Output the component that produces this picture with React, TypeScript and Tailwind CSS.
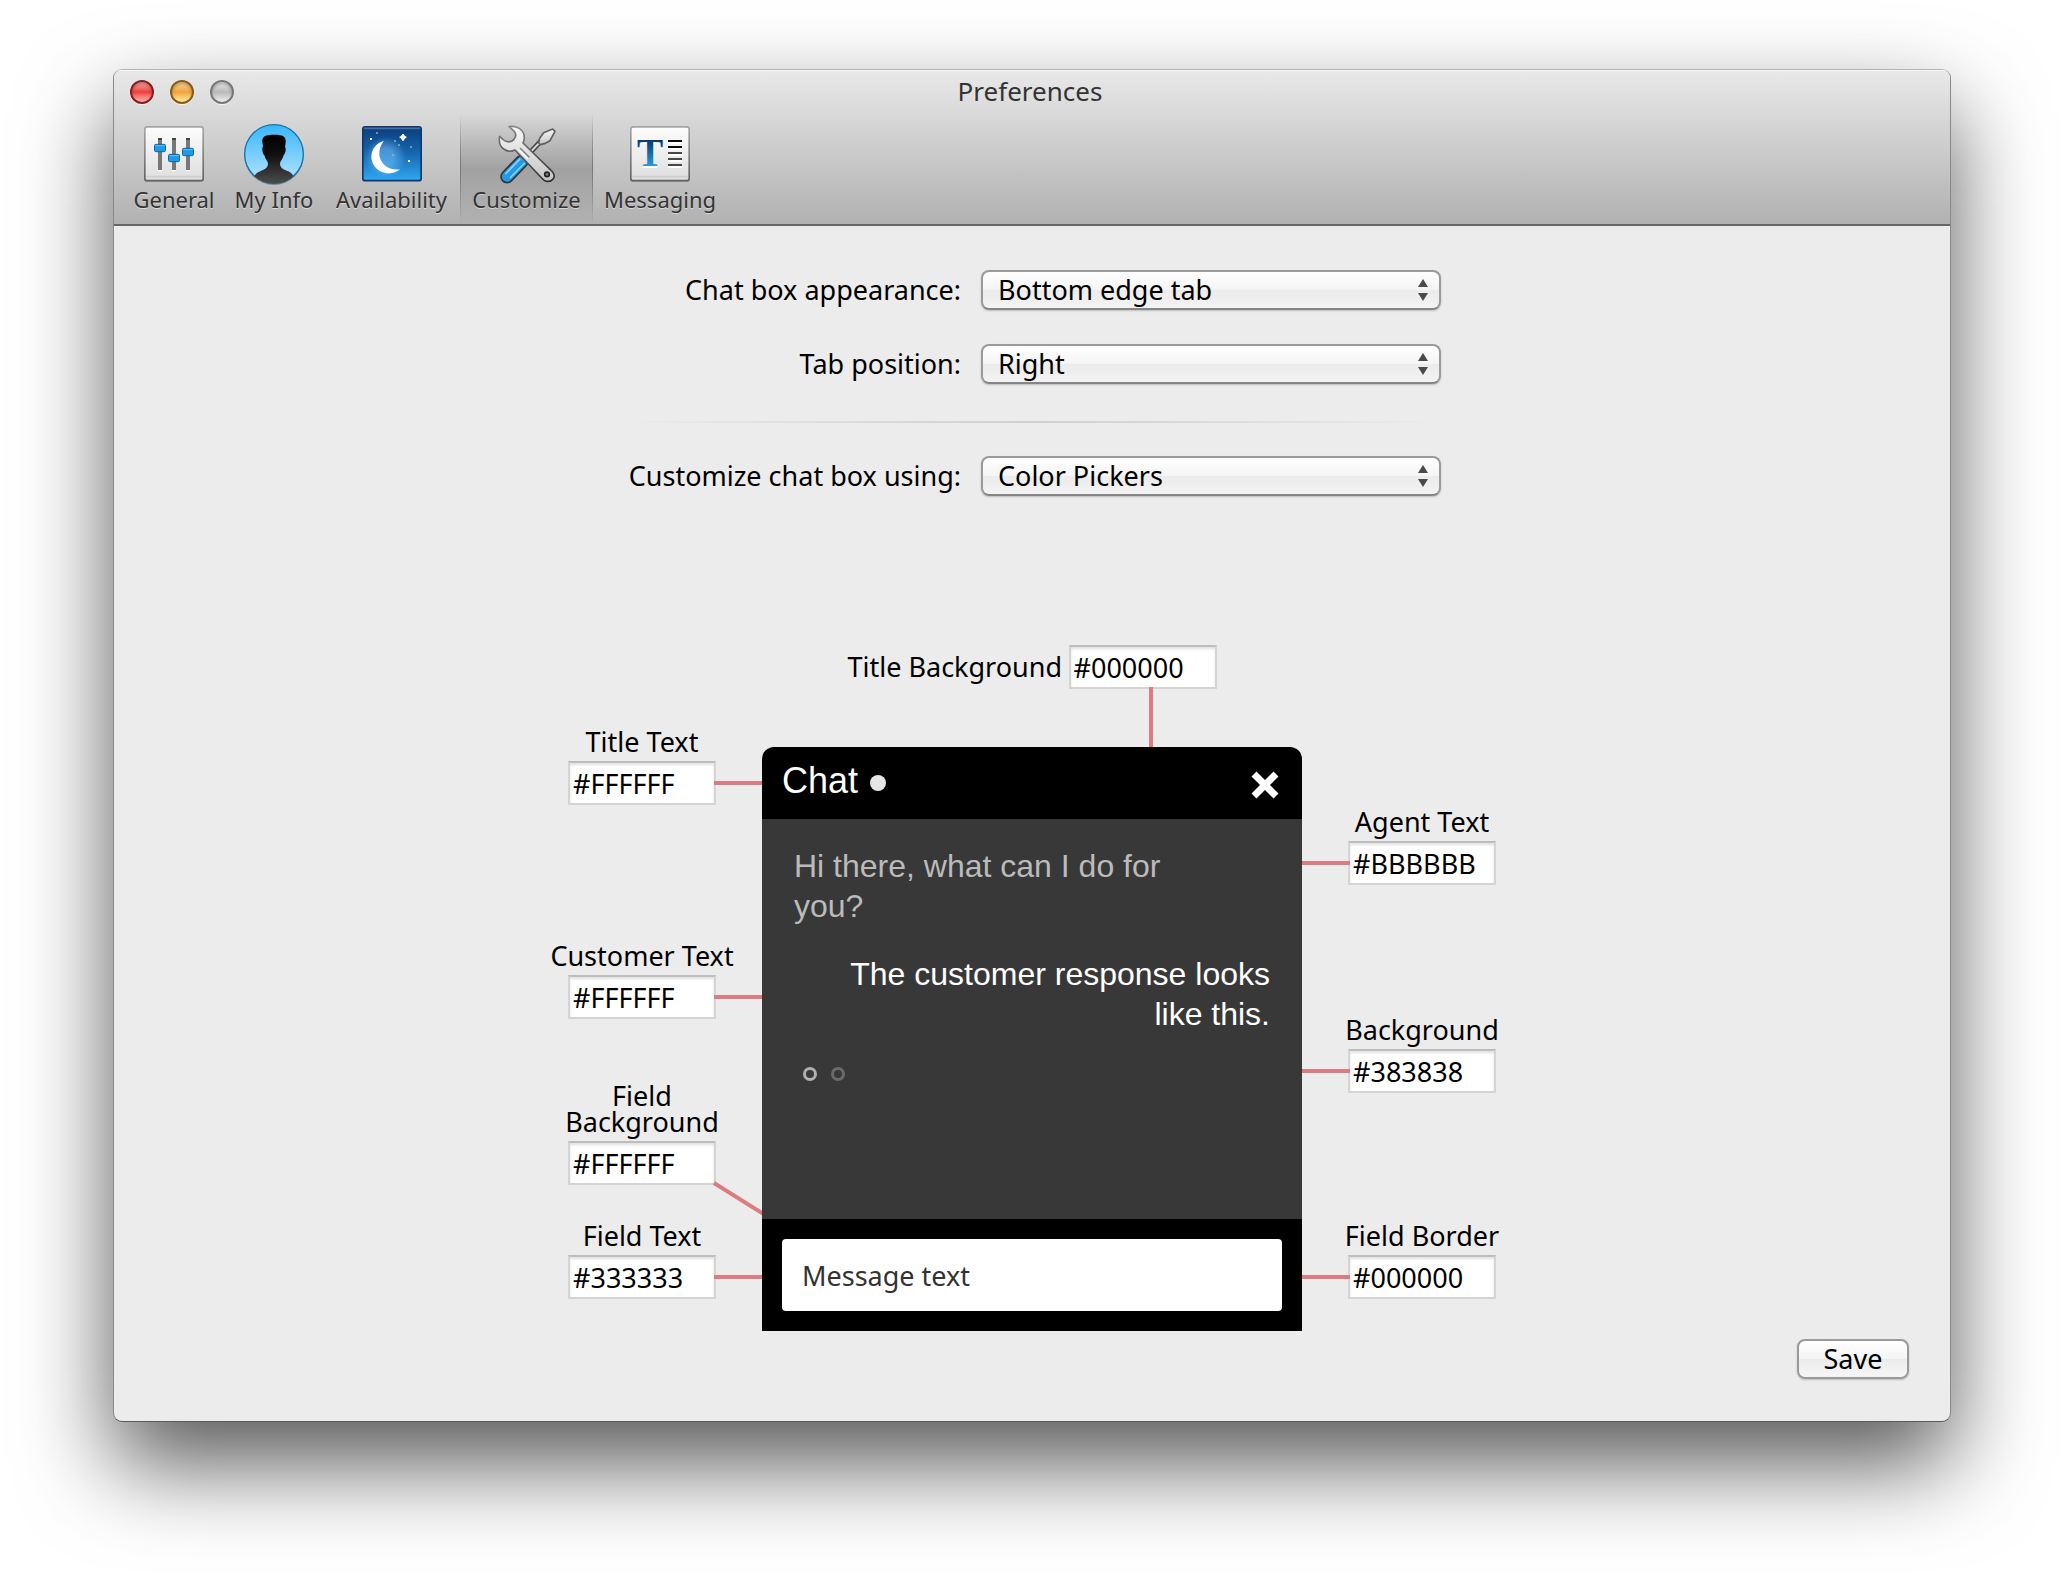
import React from "react";

type ToolbarItem = {
  label: string;
  width: string;
  icon: React.ReactNode;
  selected?: boolean;
};

function PlateDefs({ id }: { id: string }) {
  return (
    <defs>
      <linearGradient id={`${id}-fill`} x1="0" y1="0" x2="0" y2="1">
        <stop offset="0" stopColor="#fdfdfd" />
        <stop offset="1" stopColor="#dedede" />
      </linearGradient>
      <linearGradient id={`${id}-edge`} x1="0" y1="0" x2="0" y2="1">
        <stop offset="0" stopColor="#a6a6a6" />
        <stop offset="1" stopColor="#636363" />
      </linearGradient>
    </defs>
  );
}

function GeneralIcon() {
  const sliders = [
    { x: 48, y: 56 },
    { x: 90, y: 86 },
    { x: 132, y: 68 },
  ];
  return (
    <svg viewBox="0 0 180 186" className="h-[62px] w-[60px]" aria-hidden="true">
      <PlateDefs id="general" />
      <rect x="1" y="12" width="178" height="162" rx="8" fill="#000" opacity="0.25" />
      <rect x="2.5" y="8.5" width="175" height="161" rx="7" fill="url(#general-fill)" stroke="url(#general-edge)" strokeWidth="5" />
      <path d="M6 158h168" stroke="#cfcfcf" strokeWidth="5" />
      {sliders.map((s) => (
        <g key={s.x}>
          <rect x={s.x - 6} y="42" width="12" height="96" fill="#777" />
          <rect x={s.x - 6} y="42" width="12" height="6" fill="#444" />
          <rect x={s.x - 6} y="138" width="12" height="4" fill="#fff" />
          <rect x={s.x - 16.5} y={s.y + 5} width="33" height="22" rx="4" fill="#1e9ae6" stroke="#0a6aa8" strokeWidth="3" />
          <path d={`M${s.x - 14} ${s.y + 9}h28`} stroke="#4dbdf7" strokeWidth="4" />
        </g>
      ))}
    </svg>
  );
}

function MyInfoIcon() {
  return (
    <svg viewBox="0 0 180 186" className="h-[62px] w-[60px]" aria-hidden="true">
      <defs>
        <linearGradient id="info-sky" x1="0" y1="0" x2="0" y2="1">
          <stop offset="0" stopColor="#38b6fb" />
          <stop offset="1" stopColor="#b9e5ff" />
        </linearGradient>
        <linearGradient id="info-man" x1="0" y1="0" x2="0" y2="1">
          <stop offset="0" stopColor="#000" />
          <stop offset="0.4" stopColor="#111" />
          <stop offset="1" stopColor="#505050" />
        </linearGradient>
        <clipPath id="info-clip">
          <circle cx="90" cy="90" r="89" />
        </clipPath>
      </defs>
      <circle cx="90" cy="94" r="89" fill="#000" opacity="0.3" />
      <circle cx="90" cy="90" r="88" fill="url(#info-sky)" stroke="#0f76b0" strokeWidth="4" />
      <path
        clipPath="url(#info-clip)"
        fill="url(#info-man)"
        d="M57 66C54 52 53 43 62 37C74 31 108 31 118 37C127 43 126 54 123 68C127 74 125 88 119 94C117 104 110 110 108 118C108 130 116 136 128 140C142 145 150 150 158 184H22C30 150 38 145 52 140C64 136 72 130 72 118C70 110 63 104 61 94C55 88 53 74 57 66Z"
      />
    </svg>
  );
}

function AvailabilityIcon() {
  return (
    <svg viewBox="0 0 180 186" className="h-[62px] w-[60px]" aria-hidden="true">
      <defs>
        <linearGradient id="night" x1="0" y1="0" x2="0" y2="1">
          <stop offset="0" stopColor="#0b3d7a" />
          <stop offset="0.5" stopColor="#1668b0" />
          <stop offset="1" stopColor="#2fa8f2" />
        </linearGradient>
        <radialGradient id="night-glow">
          <stop offset="0.4" stopColor="#7cc8ff" stopOpacity="0.5" />
          <stop offset="1" stopColor="#7cc8ff" stopOpacity="0" />
        </radialGradient>
      </defs>
      <rect x="1" y="12" width="178" height="162" rx="8" fill="#000" opacity="0.25" />
      <rect x="2.5" y="8.5" width="175" height="161" rx="7" fill="url(#night)" stroke="#12376a" strokeWidth="5" />
      <path d="M6 13h168" stroke="#466fa3" strokeWidth="5" />
      <circle cx="70" cy="100" r="62" fill="url(#night-glow)" />
      <path fill="#fff" d="M66 51C26 62 18 106 42 132C62 154 96 152 114 136C86 140 62 126 54 102C49 84 54 64 66 51Z" />
      <path d="M123 30v20M113 40h20" stroke="#fff" strokeWidth="6" />
      <rect x="117" y="34" width="12" height="12" fill="#fff" />
      <path d="M24 42h6v6h-6zM138 108h6v6h-6z" fill="#fff" />
      <path d="M42 24h6v6h-6zM96 48h6v6h-6zM108 60h6v6h-6zM144 66h6v6h-6zM90 90h6v6h-6z" fill="#8fb4dd" opacity="0.7" />
    </svg>
  );
}

function CustomizeIcon() {
  return (
    <svg viewBox="231 190 180 186" className="h-[62px] w-[60px]" aria-hidden="true">
      <defs>
        <linearGradient id="steel" x1="0" y1="0" x2="0" y2="1">
          <stop offset="0" stopColor="#f8f8f8" />
          <stop offset="1" stopColor="#c4c4c4" />
        </linearGradient>
        <linearGradient id="steel-edge" x1="0" y1="0" x2="0" y2="1">
          <stop offset="0" stopColor="#868686" />
          <stop offset="1" stopColor="#303030" />
        </linearGradient>
      </defs>
      <path d="M362 242L330 276" stroke="#444" strokeWidth="15" />
      <path d="M362 242L330 276" stroke="#d8d8d8" strokeWidth="6" />
      <path d="M398 205L405 212L390 240L373 249L361 252L356 246L359 233L371 216Z" fill="url(#steel)" stroke="#606060" strokeWidth="5" strokeLinejoin="round" />
      <path d="M306 302L261 348" stroke="#333" strokeWidth="41" strokeLinecap="round" />
      <path d="M306 302L261 348" stroke="#219be8" strokeWidth="31" strokeLinecap="round" />
      <path d="M301 294L256 340M314 307L270 352" stroke="#8bd2fb" strokeWidth="5" />
      <path
        d="M267 198C291 193 313 208 313 231C313 238 311 242 309 247L397 333C406 344 403 353 396 358C388 365 374 363 368 355L285 268C262 279 232 262 239 227L251 238C260 246 273 246 282 236C290 226 289 217 280 209Z"
        fill="url(#steel)"
        stroke="url(#steel-edge)"
        strokeWidth="5"
        strokeLinejoin="round"
      />
      <path d="M300 262L328 290" stroke="#8a8a8a" strokeWidth="5" />
      <path d="M297 267L324 294" stroke="#fff" strokeWidth="4" />
      <circle cx="381" cy="341" r="7" fill="#777" stroke="#222" strokeWidth="5" />
    </svg>
  );
}

function MessagingIcon() {
  return (
    <svg viewBox="0 0 180 186" className="h-[62px] w-[60px]" aria-hidden="true">
      <PlateDefs id="messaging" />
      <defs>
        <linearGradient id="letter" x1="0" y1="0" x2="0" y2="1">
          <stop offset="0.2" stopColor="#073a70" />
          <stop offset="0.8" stopColor="#2b9ce0" />
        </linearGradient>
      </defs>
      <rect x="1" y="12" width="178" height="162" rx="8" fill="#000" opacity="0.25" />
      <rect x="2.5" y="8.5" width="175" height="161" rx="7" fill="url(#messaging-fill)" stroke="url(#messaging-edge)" strokeWidth="5" />
      <path d="M6 158h168" stroke="#cfcfcf" strokeWidth="5" />
      <text x="60" y="132" textAnchor="middle" fontFamily="Liberation Serif, serif" fontWeight="700" fontSize="118" fill="#fff">T</text>
      <text x="60" y="127" textAnchor="middle" fontFamily="Liberation Serif, serif" fontWeight="700" fontSize="118" fill="url(#letter)">T</text>
      <path d="M114 57h42M114 75h42M114 93h42M114 111h42M114 129h42" stroke="#fff" strokeWidth="6" />
      <path d="M114 51h42M114 69h42" stroke="#0a0a0a" strokeWidth="6" />
      <path d="M114 87h42M114 105h42M114 123h42" stroke="#484848" strokeWidth="6" />
    </svg>
  );
}

const toolbar: ToolbarItem[] = [
  { label: "General", width: "w-[102px]", icon: <GeneralIcon /> },
  { label: "My Info", width: "w-[98px]", icon: <MyInfoIcon /> },
  { label: "Availability", width: "w-[137px]", icon: <AvailabilityIcon /> },
  { label: "Customize", width: "w-[133px]", icon: <CustomizeIcon />, selected: true },
  { label: "Messaging", width: "w-[134px]", icon: <MessagingIcon /> },
];

const lights = [
  { name: "Close", className: "border-[#8c1d1d] bg-linear-to-b from-[#f6a9a4] via-[#ee3b3b] to-[#ffb3b3]" },
  { name: "Minimize", className: "border-[#8a5a17] bg-linear-to-b from-[#fbd9a0] via-[#f0a335] to-[#fff0a0]" },
  { name: "Zoom", className: "border-[#777777] bg-linear-to-b from-[#ededed] via-[#b9b9b9] to-[#f0f0f0]" },
];

function TitleBar() {
  return (
    <header className="border-b-2 border-[#666666] bg-linear-to-b from-[#e9e9e9] to-[#b1b1b1] shadow-[inset_0_1px_0_#f6f6f6]">
      <div className="grid h-11 grid-cols-[1fr_auto_1fr] items-center px-4">
        <div className="flex gap-4">
          {lights.map((l) => (
            <button
              key={l.name}
              type="button"
              aria-label={l.name}
              className={`size-6 rounded-full border-2 shadow-[0_1px_0_#f4f4f4,inset_0_2px_3px_rgba(0,0,0,0.25)] ${l.className}`}
            />
          ))}
        </div>
        <h1 className="pr-1 pb-[2px] text-[26px] leading-8 text-[#333333]">Preferences</h1>
      </div>
      <nav className="flex h-[110px] pl-[9px]">
        {toolbar.map((item) => (
          <button
            key={item.label}
            type="button"
            aria-pressed={!!item.selected}
            className={`relative flex flex-col items-center pt-[10px] ${item.width}`}
          >
            {item.selected && (
              <span className="absolute inset-0 bg-[linear-gradient(to_bottom,transparent,rgba(0,0,0,0.18)_50%,transparent)]">
                <span className="absolute inset-y-0 left-0 w-px bg-[linear-gradient(to_bottom,transparent,#777777_50%,transparent)]" />
                <span className="absolute inset-y-0 right-0 w-px bg-[linear-gradient(to_bottom,transparent,#777777_50%,transparent)]" />
              </span>
            )}
            <span className="relative">{item.icon}</span>
            <span className="relative text-[22px] leading-[26px] text-[#333333] [text-shadow:0_1px_0_rgba(255,255,255,0.5)]">
              {item.label}
            </span>
          </button>
        ))}
      </nav>
    </header>
  );
}

function SelectRow({ id, label, options }: { id: string; label: string; options: string[] }) {
  return (
    <div className="flex h-10 items-center gap-5">
      <label htmlFor={id} className="w-[352px] text-right text-[27px] leading-8">
        {label}
      </label>
      <div className="relative w-[460px]">
        <select
          id={id}
          className="block h-10 w-full appearance-none rounded-lg border-2 border-[#9a9a9a] border-b-[#858585] bg-[linear-gradient(to_bottom,#ffffff,#f4f4f4_50%,#ebebeb_50%,#f3f3f3)] pl-[15px] text-[27px] leading-[36px] shadow-[0_1px_2px_rgba(0,0,0,0.2)]"
        >
          {options.map((o) => (
            <option key={o}>{o}</option>
          ))}
        </select>
        <svg viewBox="0 0 10 22" className="pointer-events-none absolute top-[9px] right-[13px] h-[22px] w-[10px]" aria-hidden="true">
          <path d="M5 0L10 8H0ZM5 22L0 14H10Z" fill="#4a4a4a" />
        </svg>
      </div>
    </div>
  );
}

type ColorFieldProps = {
  id: string;
  label: string;
  value: string;
  line: string;
  inline?: boolean;
};

function ColorField({ id, label, value, line, inline }: ColorFieldProps) {
  return (
    <div className={inline ? "flex items-center justify-center gap-2" : "flex flex-col items-center gap-[6px]"}>
      <label
        htmlFor={id}
        className={`text-[27px] leading-[26px] ${inline ? "w-[213px] text-right whitespace-nowrap" : "text-center whitespace-pre"}`}
      >
        {label}
      </label>
      <div className="relative">
        <input
          id={id}
          type="text"
          defaultValue={value}
          className="block h-11 w-[148px] border-2 border-[#d4d4d4] border-t-[#bdbdbd] bg-white pl-[3px] text-[27px] leading-8 shadow-[inset_0_2px_3px_rgba(0,0,0,0.12)] outline-none"
        />
        <span className={`absolute bg-[#dd7c80] ${line}`} />
      </div>
    </div>
  );
}

const toRight = "left-[146px] top-5 h-1 w-12";
const toLeft = "right-[146px] top-5 h-1 w-12";

function ChatPreview() {
  return (
    <section className="mt-[18px] flex w-[540px] flex-col overflow-hidden rounded-t-xl bg-black font-['Liberation_Sans',sans-serif]">
      <div className="flex h-[72px] items-center justify-between px-5">
        <div className="flex items-center gap-3">
          <h2 className="pb-1 text-4xl text-white">Chat</h2>
          <span className="size-4 rounded-full bg-[#e6e6e6]" />
        </div>
        <button type="button" aria-label="Close chat" className="pt-[3px] pr-px">
          <svg viewBox="0 0 28 28" className="size-8 p-[2px]" aria-hidden="true">
            <path d="M3 3L25 25M25 3L3 25" stroke="#fff" strokeWidth="7" />
          </svg>
        </button>
      </div>
      <div className="h-[400px] bg-[#383838] px-8 py-[27px] text-[32px] leading-10">
        <p className="pr-16 text-[#bbbbbb]">Hi there, what can I do for you?</p>
        <p className="mt-7 pl-10 text-right text-white">The customer response looks like this.</p>
        <div className="mt-[33px] flex gap-[14px] pl-[9px]">
          <span className="size-[14px] rounded-full border-3 border-[#b0b0b0]" />
          <span className="size-[14px] rounded-full border-3 border-[#6a6a6a]" />
        </div>
      </div>
      <div className="p-5">
        <input
          type="text"
          aria-label="Message"
          defaultValue="Message text"
          className="block h-[72px] w-full rounded bg-white px-5 font-['Noto_Sans',sans-serif] text-[27px] text-[#333333] outline-none"
        />
      </div>
    </section>
  );
}

export default function App() {
  return (
    <div className="bg-white px-[113px] pt-[69px] pb-[158px] font-['Noto_Sans',sans-serif] text-black">
      <main className="overflow-hidden rounded-[9px] border border-[#8a8a8a] border-t-[#b4b4b4] border-b-[#5a5a5a] bg-[#ececec] shadow-[0_42px_92px_rgba(0,0,0,0.66)]">
        <TitleBar />

        <form className="mx-auto flex w-[846px] flex-col pt-11">
          <SelectRow id="appearance" label="Chat box appearance:" options={["Bottom edge tab", "Floating button"]} />
          <div className="h-[34px]" />
          <SelectRow id="position" label="Tab position:" options={["Right", "Left"]} />
          <hr className="mx-3 mt-[37px] mb-[33px] h-[2px] border-0 bg-[linear-gradient(to_right,transparent,#cfcfcf_50%,transparent)]" />
          <SelectRow id="using" label="Customize chat box using:" options={["Color Pickers", "Custom CSS"]} />
        </form>

        <div className="pt-[149px]">
          <ColorField inline id="title-bg" label="Title Background" value="#000000" line="left-20 top-[42px] h-[60px] w-1" />
        </div>

        <div className="mt-10 flex justify-center gap-[23px]">
          <div className="flex w-[194px] flex-col">
            <ColorField id="title-text" label="Title Text" value="#FFFFFF" line={toRight} />
            <div className="h-[138px]" />
            <ColorField id="customer-text" label="Customer Text" value="#FFFFFF" line={toRight} />
            <div className="h-16" />
            <ColorField
              id="field-bg"
              label={"Field\nBackground"}
              value="#FFFFFF"
              line="left-[146px] top-10 h-1 w-[60px] origin-left rotate-[32deg]"
            />
            <div className="h-[38px]" />
            <ColorField id="field-text" label="Field Text" value="#333333" line={toRight} />
          </div>

          {/* positioned so the card covers the ends of the connector lines */}
          <div className="relative">
            <ChatPreview />
          </div>

          <div className="flex w-[194px] flex-col pt-20">
            <ColorField id="agent-text" label="Agent Text" value="#BBBBBB" line={toLeft} />
            <div className="h-[132px]" />
            <ColorField id="background" label="Background" value="#383838" line={toLeft} />
            <div className="h-[130px]" />
            <ColorField id="field-border" label="Field Border" value="#000000" line={toLeft} />
          </div>
        </div>

        <div className="flex justify-end px-[41px] pt-2 pb-[42px]">
          <button
            type="button"
            className="h-10 w-28 rounded-lg border-2 border-[#9a9a9a] bg-[linear-gradient(to_bottom,#ffffff,#f4f4f4_50%,#ebebeb_50%,#f6f6f6)] text-[27px] leading-[34px] shadow-[0_1px_2px_rgba(0,0,0,0.2)]"
          >
            Save
          </button>
        </div>
      </main>
    </div>
  );
}
